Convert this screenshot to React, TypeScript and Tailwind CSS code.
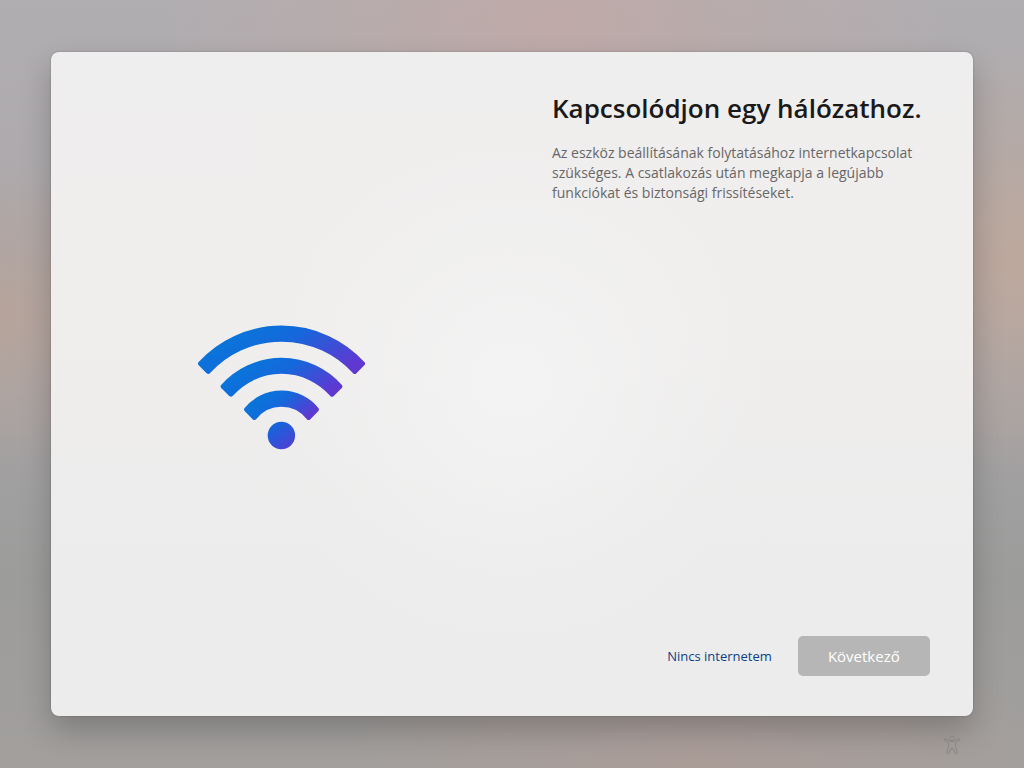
function WifiIcon() {
  return (
    <svg viewBox="0 0 168 125" className="h-[125px] w-[168px]" role="img" aria-label="Wi-Fi">
      <defs>
        <linearGradient id="arc" x1="0.15" y1="0.35" x2="1" y2="0.7">
          <stop offset="0" stopColor="#0a74da" />
          <stop offset="0.35" stopColor="#1468db" />
          <stop offset="1" stopColor="#5f38d2" />
        </linearGradient>
        <linearGradient id="dot" x1="0.15" y1="0.1" x2="0.8" y2="1">
          <stop offset="0" stopColor="#1068dc" />
          <stop offset="1" stopColor="#4f3fd4" />
        </linearGradient>
      </defs>
      <g transform="translate(83.5 113)" fill="url(#arc)" stroke="url(#arc)" strokeWidth="5" strokeLinejoin="round">
        <path d="M-81-74.4A110.2 110.2 0 0 1 81-74.4L73.2-66.6A99.2 99.2 0 0 0-73.2-66.6Z" />
        <path d="M-58.3-51.6A78.2 78.2 0 0 1 58.3-51.6L50.5-43.8A67.2 67.2 0 0 0-50.5-43.8Z" />
        <path d="M-34.9-28.5A45.3 45.3 0 0 1 34.9-28.5L27.1-20.6A34.3 34.3 0 0 0-27.1-20.6Z" />
      </g>
      <circle cx="83.4" cy="110.5" r="13.7" fill="url(#dot)" />
    </svg>
  );
}

function AccessibilityIcon() {
  return (
    <svg viewBox="0 0 18 20" className="h-5 w-[18px]" fill="none" stroke="currentColor" strokeLinejoin="round" aria-hidden="true">
      <circle cx="9" cy="3.5" r="2.3" />
      <path d="M2.2 3.6c-.9-.3-1.7.9-.8 1.6l4.2 2.3v4L3.7 17.6c-.3 1.2 1.4 1.8 1.9.6L9 12.4l3.4 5.8c.5 1.2 2.2.6 1.9-.6l-1.9-6.1v-4l4.2-2.3c.9-.7.1-1.9-.8-1.6L11 6.2H7Z" />
    </svg>
  );
}

export default function App() {
  return (
    <div className="flex min-h-screen flex-col bg-[#a7a3a4] bg-[radial-gradient(ellipse_38%_34%_at_54%_3%,#bfaaa8,transparent),radial-gradient(ellipse_22%_28%_at_100%_34%,#bda89c,transparent),radial-gradient(ellipse_20%_20%_at_0%_41%,#b6a49b,transparent),radial-gradient(ellipse_34%_22%_at_68%_100%,#ab9d98,transparent),linear-gradient(#b1aeb1,#aaa6a9_40%,#9c9c9b_75%,#a29f9d)] px-[5%] pt-13 font-['Open_Sans','Noto_Sans',sans-serif]">
      <main className="grid flex-1 grid-cols-2 rounded-lg bg-[#eeeded] bg-[radial-gradient(circle_at_50%_50%,#f3f3f3,transparent_45%),linear-gradient(#efeeee,#f0eeed_40%,#ececec_75%,#edecec)] shadow-[0_14px_30px_rgba(0,0,0,0.22),0_0_2px_rgba(0,0,0,0.25)]">
        <div className="flex items-center justify-center pt-1.5">
          <WifiIcon />
        </div>
        <section className="flex flex-col justify-between pt-9 pr-[43px] pb-10 pl-10">
          <div>
            <h1 className="text-[26px] leading-10 font-semibold whitespace-nowrap text-[#191919]">
              Kapcsolódjon egy hálózathoz.
            </h1>
            <p className="mt-[15px] text-sm leading-5 text-[#686767]">
              Az eszköz beállításának folytatásához internetkapcsolat szükséges. A csatlakozás után
              megkapja a legújabb funkciókat és biztonsági frissítéseket.
            </p>
          </div>
          <div className="flex items-center justify-end gap-[26px]">
            <button type="button" className="text-[13px] leading-5 text-[#0b3f86]">
              Nincs internetem
            </button>
            <button
              type="button"
              disabled
              className="h-10 w-[132px] rounded-[5px] bg-[#b7b6b6] text-[15px] leading-5 text-white"
            >
              Következő
            </button>
          </div>
        </section>
      </main>
      <footer className="flex h-13 items-center justify-end pt-1.5 pr-3">
        <button type="button" aria-label="Kisegítő lehetőségek" className="text-[#898585]">
          <AccessibilityIcon />
        </button>
      </footer>
    </div>
  );
}
